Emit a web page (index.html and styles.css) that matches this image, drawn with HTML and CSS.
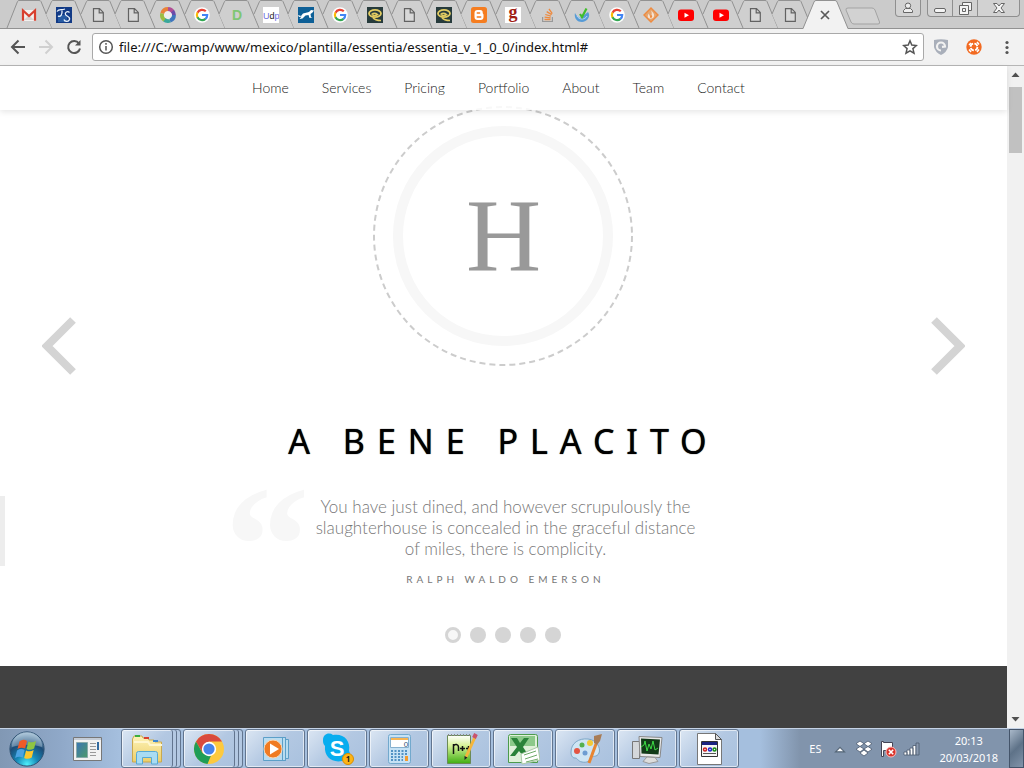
FILE: index.html
```html
<!DOCTYPE html>
<html lang="en">
<head>
<meta charset="utf-8">
<title>Essentia</title>
<link rel="stylesheet" href="styles.css">
</head>
<body>
<svg class="sprite" aria-hidden="true">
  <defs>
    <linearGradient id="folder" x1="0" y1="0" x2="0" y2="1"><stop offset="0" stop-color="#fdf3b8"/><stop offset="1" stop-color="#edcf6a"/></linearGradient>
    <radialGradient id="orb" cx=".5" cy=".95" r=".9"><stop offset="0" stop-color="#4ff0fb"/><stop offset=".35" stop-color="#1689b8"/><stop offset=".7" stop-color="#1c4c77"/><stop offset="1" stop-color="#8fb0c8"/></radialGradient>
    <linearGradient id="green" x1="0" y1="0" x2="0" y2="1"><stop offset="0" stop-color="#fff"/><stop offset=".35" stop-color="#d8f39a"/><stop offset="1" stop-color="#3fae12"/></linearGradient>
    <linearGradient id="blue" x1="0" y1="0" x2="1" y2="1"><stop offset="0" stop-color="#3b74b5"/><stop offset="1" stop-color="#4d9a6a"/></linearGradient>
    <symbol id="tab" viewBox="0 0 35 28" overflow="visible"><path fill="#cfcfcf" d="M0 14 5.500 1.500Q6 .5 7 .5H27Q28.500.5 29 1.500L40 28H6Z"/><path fill="none" stroke="#929292" d="M0 14 5.500 1.500Q6 .5 7 .5H27Q28.500.5 29 1.500L40 28"/></symbol>
    <symbol id="tab-first" viewBox="0 0 35 28" overflow="visible"><path fill="#cfcfcf" stroke="#929292" d="M-5 28 5.500 1.500Q6 .5 7 .5H27Q28.500.5 29 1.500L40 28"/></symbol>
    <symbol id="gmail" viewBox="0 0 16 16"><path fill="#f3f1f0" d="M1 3h14v11H1z"/><path fill="#d9d4d2" d="m3 13 5-5 5 5z"/><path fill="none" stroke="#d8402f" stroke-width="2.200" d="M2 13.800V3.500l6 5.500 6-5.500v10.300"/></symbol>
    <symbol id="ts" viewBox="0 0 16 16"><path fill="#123a86" d="M0 0h16v16H0z"/><path fill="#3c7cc0" d="M2 8h9v7H2z" opacity=".5"/><path fill="none" stroke="#e9f2fb" stroke-width="1.300" d="M1 4.500c2-3 4-1 8-2.500M6 3.500c.5 4-1.500 7-4 5.500M13.500 5.500c-2-2-5 0-4 2s5 2 4 5-5 2-5.500 0"/></symbol>
    <symbol id="doc" viewBox="0 0 16 16"><path fill="#d8d8d8" stroke="#626262" stroke-width="1.200" d="M3.500 1.600h6l3.800 3.800v9H3.500zM9.200 1.800v4h4"/></symbol>
    <symbol id="wheel" viewBox="0 0 16 16"><circle cx="8" cy="8" r="5.500" fill="#eee"/><g fill="none" stroke-width="3.800"><path stroke="#e8823a" d="M2.200 6.500A6 6 0 0 1 8 2"/><path stroke="#b04d94" d="M8 2a6 6 0 0 1 5 3"/><path stroke="#6a4caa" d="M12.500 4.200A6 6 0 0 1 14 8"/><path stroke="#3f76bd" d="M14 8a6 6 0 0 1-4 5.700"/><path stroke="#39a79c" d="M10 13.700A6 6 0 0 1 4 12.500"/><path stroke="#9bbd42" d="M4.500 13A6 6 0 0 1 2.200 6.500"/></g></symbol>
    <symbol id="google" viewBox="0 0 16 16"><circle cx="8" cy="8" r="7.800" fill="#fff"/><g fill="none" stroke-width="2.200"><path stroke="#e94335" d="M3.500 5.700A5.200 5.200 0 0 1 11.800 4.300"/><path stroke="#fabb05" d="M3.600 10.700A5.300 5.300 0 0 1 3.500 5.500"/><path stroke="#34a853" d="M3.500 10.300A5.200 5.200 0 0 0 11.500 11.900"/><path stroke="#4285f4" d="M8 8h5.200a5.200 5.200 0 0 1-1.800 4"/></g></symbol>
    <symbol id="letter-d" viewBox="0 0 16 16"><text x="8" y="13" text-anchor="middle" class="glyph-d">D</text></symbol>
    <symbol id="udp" viewBox="0 0 16 16"><path fill="#fff" d="M0 0h16v16H0z"/><text x="0" y="12" class="glyph-u"><tspan fill="#6a6be0">U</tspan><tspan fill="#222">d</tspan><tspan fill="#6a6be0">p</tspan></text></symbol>
    <symbol id="cat" viewBox="0 0 16 16"><path fill="#0e6097" d="M0 0h16v16H0z"/><path fill="#fff" d="m0 8 3 1 2-2.500 6-1.500 2-2 3 .500-1.500 2-2 1.500.500 3 1.500.500-3 .500-1-3-3 .500-3 3-3 .500 2-2.500-2.500.500z"/></symbol>
    <symbol id="swirl" viewBox="0 0 16 16"><path fill="#273b3c" d="M0 0h16v16H0z"/><g fill="none" stroke="#e2cc63"><ellipse cx="8" cy="6.500" rx="6" ry="3.600" stroke-width="1.800"/><path stroke-width="1.600" d="M4.500 7.500q3-2.500 6 0-3 2-5 .500M6 10.500q2 3 8 3"/></g></symbol>
    <symbol id="blogger" viewBox="0 0 16 16"><rect width="16" height="16" rx="2.500" fill="#f57d20"/><path fill="#fff" d="M3.500 6A3 3 0 0 1 6.500 3H9a2.700 2.700 0 0 1 2.700 3c.1 1 .8.900.8 1.600V10a3 3 0 0 1-3 3h-3a3 3 0 0 1-3-3z"/><path stroke="#f57d20" stroke-width="1.300" stroke-linecap="round" d="M6.200 6h2.500M6.200 10h3.600"/></symbol>
    <symbol id="letter-g" viewBox="0 0 16 16"><path fill="#fff" d="M0 0h16v16H0z"/><text x="8" y="11" text-anchor="middle" class="glyph-g">g</text></symbol>
    <symbol id="stack" viewBox="0 0 16 16"><path fill="none" stroke="#999" stroke-width="1.200" d="M2.600 10v4.500h9.800V10"/><path stroke="#ed8a3f" stroke-width="1.300" d="M4.500 12.500h6M4.600 10.200l6 .600M5.300 7.500l5.600 1.600M6.700 4.600l5 3M9 2l3.300 4.600"/></symbol>
    <symbol id="check" viewBox="0 0 16 16"><path fill="#579bd6" d="M1 6c2 4 3 3 5 5l8-6c3 3 0 10-6 10S0 10 1 6z"/><path fill="none" stroke="#b9dcf4" d="M3 9c2 4 8 4 10 0"/><path fill="none" stroke="#40bd2c" stroke-width="2.200" d="m6 7 2 3 4.500-8.500"/></symbol>
    <symbol id="diamond" viewBox="0 0 16 16"><path fill="#e4a670" stroke="#ee8b40" stroke-width="1.400" d="m8 1 7 7-7 7-7-7z"/><path fill="#f6e2d2" d="M8 3.500c4 3 4 7 1 8-5 1-5-3-3-5 0 2 1 3 2 2s1-3 0-5z"/><path fill="#ee8b40" d="M8 7.500c2 2 1 3 0 3.500-2-.5-1-2 0-3.500z"/></symbol>
    <symbol id="youtube" viewBox="0 0 16 16"><rect y="2.500" width="16" height="11.500" rx="3" fill="#f00"/><path fill="#fff" d="m6.500 5.800 4.500 2.500-4.500 2.500z"/></symbol>
  </defs>
</svg>

<header class="browser">
  <div class="strip">
    <nav class="tabs" aria-label="Open tabs">
      <button class="tab" aria-label="Gmail"><svg class="tab-shape"><use href="#tab-first"/></svg><svg class="fav"><use href="#gmail"/></svg></button>
      <button class="tab" aria-label="TS"><svg class="tab-shape"><use href="#tab"/></svg><svg class="fav"><use href="#ts"/></svg></button>
      <button class="tab" aria-label="Page"><svg class="tab-shape"><use href="#tab"/></svg><svg class="fav"><use href="#doc"/></svg></button>
      <button class="tab" aria-label="Page"><svg class="tab-shape"><use href="#tab"/></svg><svg class="fav"><use href="#doc"/></svg></button>
      <button class="tab" aria-label="Colours"><svg class="tab-shape"><use href="#tab"/></svg><svg class="fav"><use href="#wheel"/></svg></button>
      <button class="tab" aria-label="Google"><svg class="tab-shape"><use href="#tab"/></svg><svg class="fav"><use href="#google"/></svg></button>
      <button class="tab" aria-label="D"><svg class="tab-shape"><use href="#tab"/></svg><svg class="fav"><use href="#letter-d"/></svg></button>
      <button class="tab" aria-label="Udp"><svg class="tab-shape"><use href="#tab"/></svg><svg class="fav"><use href="#udp"/></svg></button>
      <button class="tab" aria-label="Cat"><svg class="tab-shape"><use href="#tab"/></svg><svg class="fav"><use href="#cat"/></svg></button>
      <button class="tab" aria-label="Google"><svg class="tab-shape"><use href="#tab"/></svg><svg class="fav"><use href="#google"/></svg></button>
      <button class="tab" aria-label="Swirl"><svg class="tab-shape"><use href="#tab"/></svg><svg class="fav"><use href="#swirl"/></svg></button>
      <button class="tab" aria-label="Page"><svg class="tab-shape"><use href="#tab"/></svg><svg class="fav"><use href="#doc"/></svg></button>
      <button class="tab" aria-label="Swirl"><svg class="tab-shape"><use href="#tab"/></svg><svg class="fav"><use href="#swirl"/></svg></button>
      <button class="tab" aria-label="Blogger"><svg class="tab-shape"><use href="#tab"/></svg><svg class="fav"><use href="#blogger"/></svg></button>
      <button class="tab" aria-label="g"><svg class="tab-shape"><use href="#tab"/></svg><svg class="fav"><use href="#letter-g"/></svg></button>
      <button class="tab" aria-label="Stack Overflow"><svg class="tab-shape"><use href="#tab"/></svg><svg class="fav"><use href="#stack"/></svg></button>
      <button class="tab" aria-label="Check"><svg class="tab-shape"><use href="#tab"/></svg><svg class="fav"><use href="#check"/></svg></button>
      <button class="tab" aria-label="Google"><svg class="tab-shape"><use href="#tab"/></svg><svg class="fav"><use href="#google"/></svg></button>
      <button class="tab" aria-label="Diamond"><svg class="tab-shape"><use href="#tab"/></svg><svg class="fav"><use href="#diamond"/></svg></button>
      <button class="tab" aria-label="YouTube"><svg class="tab-shape"><use href="#tab"/></svg><svg class="fav"><use href="#youtube"/></svg></button>
      <button class="tab" aria-label="YouTube"><svg class="tab-shape"><use href="#tab"/></svg><svg class="fav"><use href="#youtube"/></svg></button>
      <button class="tab" aria-label="Page"><svg class="tab-shape"><use href="#tab"/></svg><svg class="fav"><use href="#doc"/></svg></button>
      <button class="tab" aria-label="Page"><svg class="tab-shape"><use href="#tab"/></svg><svg class="fav"><use href="#doc"/></svg></button>
    </nav>
    <button class="tab-active" aria-label="Close tab"><svg viewBox="0 0 50 29"><path fill="#f2f2f2" d="M2 29 13 2Q13.500.5 15 .5H34Q35.500.5 36 2L47 29z"/><path fill="none" stroke="#929292" d="M2 28.500 13 2Q13.500.5 15 .5H34Q35.500.5 36 2L47 28.500"/><path stroke="#5a5a5a" stroke-width="1.700" d="m20 11 8 8m0-8-8 8"/></svg></button>
    <button class="tab-new" aria-label="New tab"><svg viewBox="0 0 36 18"><path fill="#d2d2d2" stroke="#a3a3a3" d="M3 1h24q2 0 3 2l4.500 12q.5 2-1.500 2H9q-2 0-3-2L1 3Q.5 1 3 1z"/></svg></button>
    <div class="window-controls">
      <button class="account" aria-label="Account"><svg viewBox="0 0 24 16"><path fill="#eee" stroke="#666" d="M7.500 12.500v-2l2-2h5l2 2v2zM12 3a2.700 2.700 0 1 1 0 5.400A2.700 2.700 0 0 1 12 3z"/></svg></button>
      <div class="window-group">
        <button aria-label="Minimise"><svg viewBox="0 0 24 16"><rect x="6.500" y="8.500" width="11" height="4" rx="1.500" fill="#f5f5f5" stroke="#666"/></svg></button>
        <button aria-label="Restore"><svg viewBox="0 0 24 16"><path fill="#f5f5f5" stroke="#666" d="M9.500 2.500h9v8h-9z"/><path fill="#f5f5f5" stroke="#666" d="M6.500 5.500h9v9h-9zM9.500 8.500h3v3h-3z"/></svg></button>
        <button class="close" aria-label="Close"><svg viewBox="0 0 24 16"><path fill="#f5f5f5" stroke="#666" d="M6.500 3.500h3.500l2 2.500 2-2.500h3.500L14 8l3.500 4.500H14L12 10l-2 2.500H6.500L10 8z"/></svg></button>
      </div>
    </div>
  </div>

  <div class="toolbar">
    <div class="toolbar-nav">
      <button aria-label="Back"><svg viewBox="0 0 16 16"><path d="M15 8H2m6.500-6.500L2 8l6.500 6.500"/></svg></button>
      <button aria-label="Forward" disabled><svg viewBox="0 0 16 16"><path d="M1 8h13M7.500 1.500 14 8l-6.500 6.500"/></svg></button>
      <button aria-label="Reload"><svg viewBox="0 0 16 16"><path d="M13 4.500A6 6 0 1 0 14 9.500"/><path d="M14.500 1v5.500H9z" class="solid"/></svg></button>
    </div>
    <div class="address">
      <svg viewBox="0 0 16 16" aria-hidden="true"><circle cx="8" cy="8" r="6.300"/><path d="M8 7v4.500M8 4v1.700"/></svg>
      <input type="text" aria-label="Address" value="file:///C:/wamp/www/mexico/plantilla/essentia/essentia_v_1_0_0/index.html#">
      <button aria-label="Bookmark"><svg viewBox="0 0 16 16"><path d="m8 1.800 1.800 4.300 4.600.4-3.500 3.100 1.100 4.600L8 11.800l-4 2.400 1.100-4.600-3.500-3.100 4.600-.4z"/></svg></button>
    </div>
    <div class="extensions">
      <button aria-label="Shield"><svg viewBox="0 0 16 16"><path fill="#a9afba" d="M1 1q7-1.500 14 0v7q-1 5-7 8-6-3-7-8z"/><path fill="none" stroke="#f2f2f2" stroke-width="2.200" d="M8 11.500A4 4 0 1 1 12 7.500L9 7.800"/></svg></button>
      <button aria-label="Extension"><svg viewBox="0 0 16 16"><circle cx="8" cy="8" r="7.700" fill="#f26a21"/><circle cx="8" cy="8" r="3.400" fill="none" stroke="#fff" stroke-width="1.800" stroke-dasharray="4 1.340"/><path stroke="#fff" stroke-width="1.500" d="m3 6 2-2m6-1 2 2.500M3 10.500 5 13m6 0 2-2.500"/></svg></button>
      <button aria-label="Menu"><svg viewBox="0 0 16 16"><g fill="#555"><circle cx="8" cy="3.500" r="1.600"/><circle cx="8" cy="8.500" r="1.600"/><circle cx="8" cy="13.500" r="1.600"/></g></svg></button>
    </div>
  </div>
</header>

<div class="viewport">
  <main class="page">
    <nav class="menu">
      <a href="#">Home</a><a href="#">Services</a><a href="#">Pricing</a><a href="#">Portfolio</a><a href="#">About</a><a href="#">Team</a><a href="#">Contact</a>
    </nav>
    <section class="hero">
      <button class="arrow" aria-label="Previous"><svg viewBox="0 0 34 58"><path d="M31 3 5 29l26 26"/></svg></button>
      <div class="slide">
        <div class="logo">
          <svg viewBox="0 0 260 260" aria-hidden="true"><circle cx="130" cy="130" r="129" fill="none" stroke="#ccc" stroke-width="2" stroke-dasharray="6 4.010"/><circle cx="130" cy="130" r="105" fill="none" stroke="#f7f7f7" stroke-width="10"/></svg>
          <span>H</span>
        </div>
        <h1>A BENE PLACITO</h1>
        <blockquote>
          <span class="mark" aria-hidden="true">“</span>
          <p>You have just dined, and however scrupulously the slaughterhouse is concealed in the graceful distance of miles, there is complicity.</p>
          <cite>RALPH WALDO EMERSON</cite>
        </blockquote>
        <div class="dots">
          <button class="current" aria-label="Slide 1"></button><button aria-label="Slide 2"></button><button aria-label="Slide 3"></button><button aria-label="Slide 4"></button><button aria-label="Slide 5"></button>
        </div>
      </div>
      <button class="arrow" aria-label="Next"><svg viewBox="0 0 34 58"><path d="m3 3 26 26L3 55"/></svg></button>
      <span class="edge"></span>
    </section>
    <section class="dark"></section>
  </main>
  <div class="scrollbar" aria-hidden="true">
    <svg viewBox="0 0 17 17"><path d="m4.500 11 4-4.500 4 4.500z"/></svg>
    <span class="thumb"></span>
    <svg viewBox="0 0 17 17"><path d="m4.500 6 4 4.500 4-4.500z"/></svg>
  </div>
</div>

<footer class="taskbar">
  <button class="start" aria-label="Start"><svg viewBox="0 0 40 40"><circle cx="20" cy="20" r="18" fill="url(#orb)" stroke="#2b4f70"/><path fill="#dbe9f3" opacity=".35" d="M4 18a16 16 0 0 1 32 0q-16-5-32 0z"/><path fill="#ee5a28" d="M12 12q4-3 8-.500l-2 8q-4-2-8 .500z"/><path fill="#8fc542" d="M21.500 12q4 2 8-.500l-2 8q-4 2.500-8 .500z"/><path fill="#4ba3e3" d="M9.500 21.500q4-2.500 8-.500l-2 8q-4-2-8 .500z"/><path fill="#fcc72e" d="M19 21.500q4 2 8-.500l-2 8q-4 2.500-8 .500z"/></svg></button>
  <button class="pinned" aria-label="Window"><svg viewBox="0 0 32 28"><path fill="#f2f2f2" stroke="#777" d="M1.500 2.500h28v23h-28z"/><path fill="#c4ccd6" d="M2 3h27v2H2z"/><path fill="url(#blue)" stroke="#8aa" d="M4.500 7.500h11v15h-11z"/><path stroke="#999" d="M18 8.500h6M18 11.500h6M18 14.500h6M18 17.500h6M18 20.500h6"/><path fill="#326a9f" d="M25 7h2v8h-2z"/></svg></button>
  <div class="apps">
    <button class="app stacked" aria-label="Explorer"><svg viewBox="0 0 34 34"><path fill="url(#folder)" stroke="#c9a94e" d="M2.500 7 4 4h8l1 2h5l1 2h5l1 2h6.500v20H2.500z"/><path fill="none" stroke="#fff7cf" stroke-width="2" d="M4 10h14l2 3h12"/><path fill="#3bae3f" d="M5 3h5v2H5z"/><path fill="#d8402f" d="M14 5h5v2h-5z"/><path fill="#3d87cf" d="M23 8h5v2h-5z"/><path fill="#a9dcf3" stroke="#57a9d4" d="M6.500 32V21.500q0-2 2-2h17q2 0 2 2V32h-6v-6.500h-9V32z"/></svg></button>
    <button class="app stacked" aria-label="Chrome"><svg viewBox="0 0 34 34"><circle cx="17" cy="17" r="15" fill="#fdc93e"/><path fill="#d94a3d" d="M4 9.500a15 15 0 0 1 26 0H17l-6.500 11.300z"/><path fill="#1f9d57" d="M4 9.500 10.500 21l6.500 3 2-.5L15.500 32A15 15 0 0 1 4 9.500z"/><circle cx="17" cy="17" r="7.200" fill="#fff"/><circle cx="17" cy="17" r="5.600" fill="#4683ea"/></svg></button>
    <button class="app" aria-label="Media Player"><svg viewBox="0 0 34 34"><path fill="#b9dcf0" stroke="#5c9fc8" d="M5.500 5.500h22v23h-22zM24.500 5.500h3v23h-3zM27.500 7.500h3v19h-3z"/><circle cx="15" cy="17" r="9" fill="#f07b22" stroke="#f9d7b5"/><path fill="#fff" d="m12 11.500 9 5.500-9 5.500z"/></svg></button>
    <button class="app" aria-label="Skype"><svg viewBox="0 0 34 34"><path fill="#08adef" d="M3 8c0-6 6-8 10-5 10-2 18 5 16 16 3 5-1 11-7 10C12 31 4 25 5 14 3 12 3 10 3 8z"/><text x="17" y="24" text-anchor="middle" class="glyph-s">S</text><circle cx="28" cy="27" r="5.500" fill="#fdb515" stroke="#d98d00"/><text x="28" y="30" text-anchor="middle" class="glyph-1">1</text></svg></button>
    <button class="app" aria-label="Calculator"><svg viewBox="0 0 34 34"><rect x="6.500" y="2.500" width="22" height="29" rx="2" fill="#c6e2f5" stroke="#72a9cd"/><path fill="#fff" stroke="#87b1cf" d="M8.500 5.500h18v10h-18z"/><path fill="#f7b553" d="M9 6h17v2H9z"/><text x="24" y="15" text-anchor="middle" class="glyph-0">0</text><path stroke="#5292c4" stroke-width="2" stroke-dasharray="2 1.500" d="M9 19h17M9 22h17M9 25h12M9 28h12"/><path fill="#f39b2f" d="M23 24h3v5h-3z"/></svg></button>
    <button class="app" aria-label="Notepad++"><svg viewBox="0 0 34 34"><path fill="url(#green)" stroke="#6b8a55" d="M3.500 3.500h23v28h-23z"/><path stroke="#888" stroke-dasharray="1 2" stroke-width="2" d="M4 3h22"/><path fill="none" stroke="#111" stroke-width="1.500" d="M9.500 22V12m0 2q1-2 3-1.500t2 2.500v4M16 16.500h5m-2.500-2.500v5M22 16.500h5m-2.500-2.500v5"/><path stroke="#f4b63c" stroke-width="3" d="m31 5-9 20"/><path stroke="#c9536b" stroke-width="4" d="m32 2-2 4"/><path fill="#222" d="m20.500 24 3 1.500-3 2.500z"/></svg></button>
    <button class="app" aria-label="Excel"><svg viewBox="0 0 34 34"><path fill="#dff0d9" stroke="#4c9b4c" d="M2.500 4.500q0-2 2-2h25q2 0 2 2v26h-29z"/><path fill="#8cc98a" d="M4 4h25v10H4z"/><path fill="#2a8239" d="M5 6h6l3 5 4-5h5l-6 9 6 9h-6l-4-5-4 5H4l7-9z"/><path fill="#fff" stroke="#a9c9a6" d="m15 22 17-7 2 13-18 4z"/><path stroke="#6daa68" d="m18 23 12-4m-11 8 12-4m-11 7 12-3"/></svg></button>
    <button class="app" aria-label="Paint"><svg viewBox="0 0 34 34"><path fill="#cfe5f4" stroke="#7da7c6" d="M3 20C3 11 11 6 20 7s13 9 11 14-7 2-8 5-4 5-9 4-4-4-7-4-4-3-4-6z"/><circle cx="9" cy="19" r="3" fill="#e35543"/><circle cx="14" cy="13" r="2.500" fill="#54b04e"/><circle cx="22" cy="11" r="3" fill="#f2c937"/><circle cx="17" cy="21" r="2.500" fill="#6e9dd2"/><path stroke="#e78532" stroke-width="3" d="m28 12-7 19"/><path fill="#a87c56" d="m26 4 8-2-2 7-3 4-3-2z"/></svg></button>
    <button class="app" aria-label="Monitor"><svg viewBox="0 0 34 34"><path fill="#d4d7da" stroke="#777" d="M2.500 9.500h7v17h-7z"/><path fill="#e8e8e8" stroke="#888" d="m9 4.500 23 1-2 20-20-1z"/><path fill="#123a18" d="m11 6.500 19 1-1.500 15-17-1z"/><path fill="none" stroke="#3ddc45" d="m11 15 3-2 1-4 2 10 2-7 2 5 2-8 2 9 3-2"/><path fill="#ddd" stroke="#999" d="m17 25 8 .5 3 4-9 2-6-2z"/></svg></button>
    <button class="app" aria-label="Document"><svg viewBox="0 0 34 34"><path fill="#fff" stroke="#777" d="M5.500 1.500h18l6 6v25h-24z"/><path fill="#ddd" stroke="#555" d="M23.500 1.500v6h6z"/><path fill="#f6f6f6" stroke="#333" d="M9.500 9.500h16v15h-16z"/><path fill="#1a2380" d="M10 10h15v3H10z"/><g fill="none" stroke-width="1.500"><circle cx="13" cy="17.500" r="1.500" stroke="#c22"/><circle cx="18" cy="17.500" r="1.500" stroke="#22c"/><circle cx="22.500" cy="17.500" r="1.500" stroke="#181"/></g><path stroke="#555" d="M11 21.500h13"/></svg></button>
  </div>
  <div class="tray">
    <span class="lang">ES</span>
    <svg viewBox="0 0 16 16" class="up"><path fill="#fff" stroke="#567" d="m4 10.500 4-4 4 4z"/></svg>
    <svg viewBox="0 0 18 18"><g fill="#fff" stroke="#4b5a70" stroke-width=".8"><path d="m5 1 4 2.700-4 2.800-4-2.800zM13 1l4 2.700-4 2.800-4-2.800zM5 6.500 9 9l-4 3-4-2.800zM13 6.500l4 2.700-4 2.800L9 9zM5 13l4-3 4 3-4 3z"/></g></svg>
    <svg viewBox="0 0 18 18"><path fill="#fff" stroke="#445" d="M2.500 1.500v15h2v-6h9v-8h-9v-1z"/><circle cx="12" cy="12" r="5" fill="#d9332b" stroke="#fbb"/><path stroke="#fff" stroke-width="1.600" d="m9.800 9.800 4.400 4.400m0-4.400-4.400 4.400"/></svg>
    <svg viewBox="0 0 18 18"><g fill="#fff" stroke="#4b5a70" stroke-width=".8"><path d="M1 12h3v3H1zM4 10h3v5H4zM7 8h3v7H7zM10 5.500h3V15h-3z"/><path fill="#8a9ab0" d="M13 3h3v12h-3z"/></g></svg>
    <time class="clock">20:13<br>20/03/2018</time>
    <button class="desktop" aria-label="Show desktop"></button>
  </div>
</footer>
</body>
</html>
```

FILE: styles.css
```css
* { box-sizing: border-box; }
body {
  margin: 0;
  height: 100vh;
  display: flex;
  flex-direction: column;
  overflow: hidden;
  background: #fff;
  font-family: "Noto Sans", sans-serif;
}
button {
  margin: 0;
  padding: 0;
  border: 0;
  background: none;
  font: inherit;
  display: grid;
  place-items: center;
}
svg { display: block; }
.sprite { position: absolute; width: 0; height: 0; }

.glyph-d { font: 700 14px "Liberation Sans", sans-serif; fill: #80c673; }
.glyph-u { font: 9px "Liberation Sans", sans-serif; }
.glyph-g { font: 700 18px "Liberation Serif", serif; fill: #a11d14; }
.glyph-s { font: 700 22px "Liberation Sans", sans-serif; fill: #fff; }
.glyph-1 { font: 700 8px "Noto Sans", sans-serif; fill: #222; }
.glyph-0 { font: 8px "Liberation Sans", sans-serif; fill: #357; }

/* Tab strip */
.strip {
  display: flex;
  height: 29px;
  padding-left: 12px;
  background: #cbcbcb;
  border-bottom: 1px solid #929292;
}
.tabs { flex: 1; min-width: 0; display: flex; }
.tab { flex: 1; min-width: 0; height: 28px; grid-template-columns: minmax(0, 1fr); }
.tab > svg { grid-area: 1 / 1; }
.tab-shape { width: 35px; height: 28px; overflow: visible; }
.fav { width: 16px; height: 16px; margin-top: 2px; }
.tab-active { width: 38px; height: 29px; z-index: 1; }
.tab-active svg { width: 50px; height: 29px; margin: 0 -6px; }
.tab-new { width: 36px; height: 31px; }
.tab-new svg { width: 36px; height: 18px; }
.window-controls { display: flex; align-items: flex-start; gap: 6px; padding: 0 4px 0 14px; }
.window-controls svg { width: 24px; height: 16px; }
.account, .window-group {
  height: 17px;
  border: 1px solid #8f8f8f;
  border-top: 0;
  border-radius: 0 0 4px 4px;
  background: #d2d2d2;
}
.window-group { display: flex; }
.window-group button + button { border-left: 1px solid #8f8f8f; }
.window-group .close { width: 42px; }

/* Toolbar */
.toolbar {
  display: flex;
  align-items: center;
  height: 37px;
  padding: 0 9px 0 8px;
  background: #f2f2f2;
  border-bottom: 1px solid #b6b6b6;
}
.toolbar-nav { display: flex; gap: 12px; padding: 0 10px 0 2px; }
.toolbar-nav svg, .address svg, .extensions svg { width: 16px; height: 16px; }
.toolbar-nav path { fill: none; stroke: #555; stroke-width: 2; }
.toolbar-nav .solid { fill: #555; stroke: none; }
.toolbar-nav :disabled path { stroke: #d0d0d0; }
.address {
  flex: 1;
  display: flex;
  align-items: center;
  gap: 5px;
  height: 28px;
  padding: 0 5px;
  background: #fff;
  border: 1px solid #a9a9a9;
  border-radius: 3px;
}
.address svg { fill: none; stroke: #555; stroke-width: 1.5; }
.address input {
  flex: 1;
  min-width: 0;
  border: 0;
  padding: 0;
  outline: 0;
  color: #111;
  background: none;
  font: 13px "Noto Sans", sans-serif;
}
.extensions { display: flex; gap: 17px; padding-left: 9px; }

/* Page area */
.viewport { flex: 1; min-height: 0; display: flex; }
.page { flex: 1; min-width: 0; display: flex; flex-direction: column; font-family: Lato, sans-serif; }
.menu {
  display: flex;
  justify-content: center;
  gap: 33px;
  padding: 11px 10px 12px 0;
  background: rgba(255, 255, 255, .85);
  box-shadow: 0 2px 6px rgba(0, 0, 0, .1);
  z-index: 1;
}
.menu a { color: #222; font-weight: 300; font-size: 14px; line-height: 21px; text-decoration: none; }
.hero {
  position: relative;
  display: flex;
  align-items: center;
  justify-content: space-between;
  padding: 0 42px;
  margin-top: -4px;
}
.arrow svg { width: 34px; height: 58px; fill: none; stroke: #d4d4d4; stroke-width: 8; }
.arrow { margin-bottom: 80px; }
.edge { position: absolute; left: 0; top: 390px; width: 5px; height: 70px; background: #ededed; }
.slide { display: flex; flex-direction: column; align-items: center; padding-bottom: 23px; }
.logo { display: grid; place-items: center; width: 260px; height: 260px; }
.logo > * { grid-area: 1 / 1; }
.logo svg { width: 260px; height: 260px; }
.logo span { font: 104px/120px "Liberation Serif", serif; color: #999; }
h1 {
  margin: 51px 0 0;
  color: #000;
  font: 400 34px/48px "Noto Sans", sans-serif;
  letter-spacing: 12px;
  text-shadow: 0 0 1px #000;
}
blockquote {
  position: relative;
  width: 384px;
  margin: 31px 0 0 4px;
  display: flex;
  flex-direction: column;
  align-items: center;
  color: #777;
  text-align: center;
}
.mark {
  position: absolute;
  left: -89px;
  top: -35px;
  color: #f7f7f7;
  font: 700 170px/170px "Liberation Serif", serif;
}
blockquote p { margin: 0; font-weight: 300; font-size: 17px; line-height: 21px; }
cite { margin-top: 12px; font-style: normal; font-size: 10px; line-height: 16px; letter-spacing: 4px; }
.dots { display: flex; gap: 9px; margin-top: 40px; }
.dots button { width: 16px; height: 16px; border-radius: 50%; background: #d5d5d5; }
.dots .current { border: 3px solid #d5d5d5; background: #f7f7f7; }
.dark { flex: 1; background: #414141; }

.scrollbar { width: 17px; display: flex; flex-direction: column; background: #f1f1f1; }
.scrollbar svg { width: 17px; height: 17px; fill: #505050; }
.scrollbar .thumb { height: 66px; margin: 4px 2px auto; background: #c1c1c1; }

/* Taskbar */
.taskbar {
  display: flex;
  height: 40px;
  border-top: 1px solid #c5d3e6;
  background: linear-gradient(90deg, #8198b4, #8fa8c8 60px, #a5bfde 120px, #a5bfde 760px, #8194ac 800px);
}
.start { width: 54px; }
.start svg { width: 40px; height: 38px; }
.pinned { width: 67px; }
.pinned svg { width: 32px; height: 28px; }
.apps { display: flex; gap: 2px; }
.app {
  width: 60px;
  border: 1px solid #62758f;
  border-radius: 3px;
  background: linear-gradient(135deg, #dbe6f3, #b3c8e2 50%, #a9c1de);
  box-shadow: inset 0 0 0 1px rgba(255, 255, 255, .6);
}
.app svg { width: 34px; height: 34px; }
/* Two slivers at the right edge stand for further windows of the same program */
.stacked {
  padding-right: 8px;
  box-shadow:
    inset -3px 0 #b3c8e2,
    inset -4px 0 #62758f,
    inset -7px 0 #b3c8e2,
    inset -8px 0 #62758f,
    inset 0 0 0 1px rgba(255, 255, 255, .6);
}
.tray { margin-left: auto; display: flex; align-items: center; gap: 6px; color: #fff; font-size: 11px; }
.tray svg { width: 18px; height: 18px; }
.lang { padding-right: 4px; }
.clock { padding: 0 5px 0 12px; line-height: 17px; text-align: center; }
.desktop {
  width: 15px;
  height: 39px;
  border: 1px solid #44546a;
  background: linear-gradient(135deg, #a9b8c9, #5e7288 50%, #8294aa);
}
```
